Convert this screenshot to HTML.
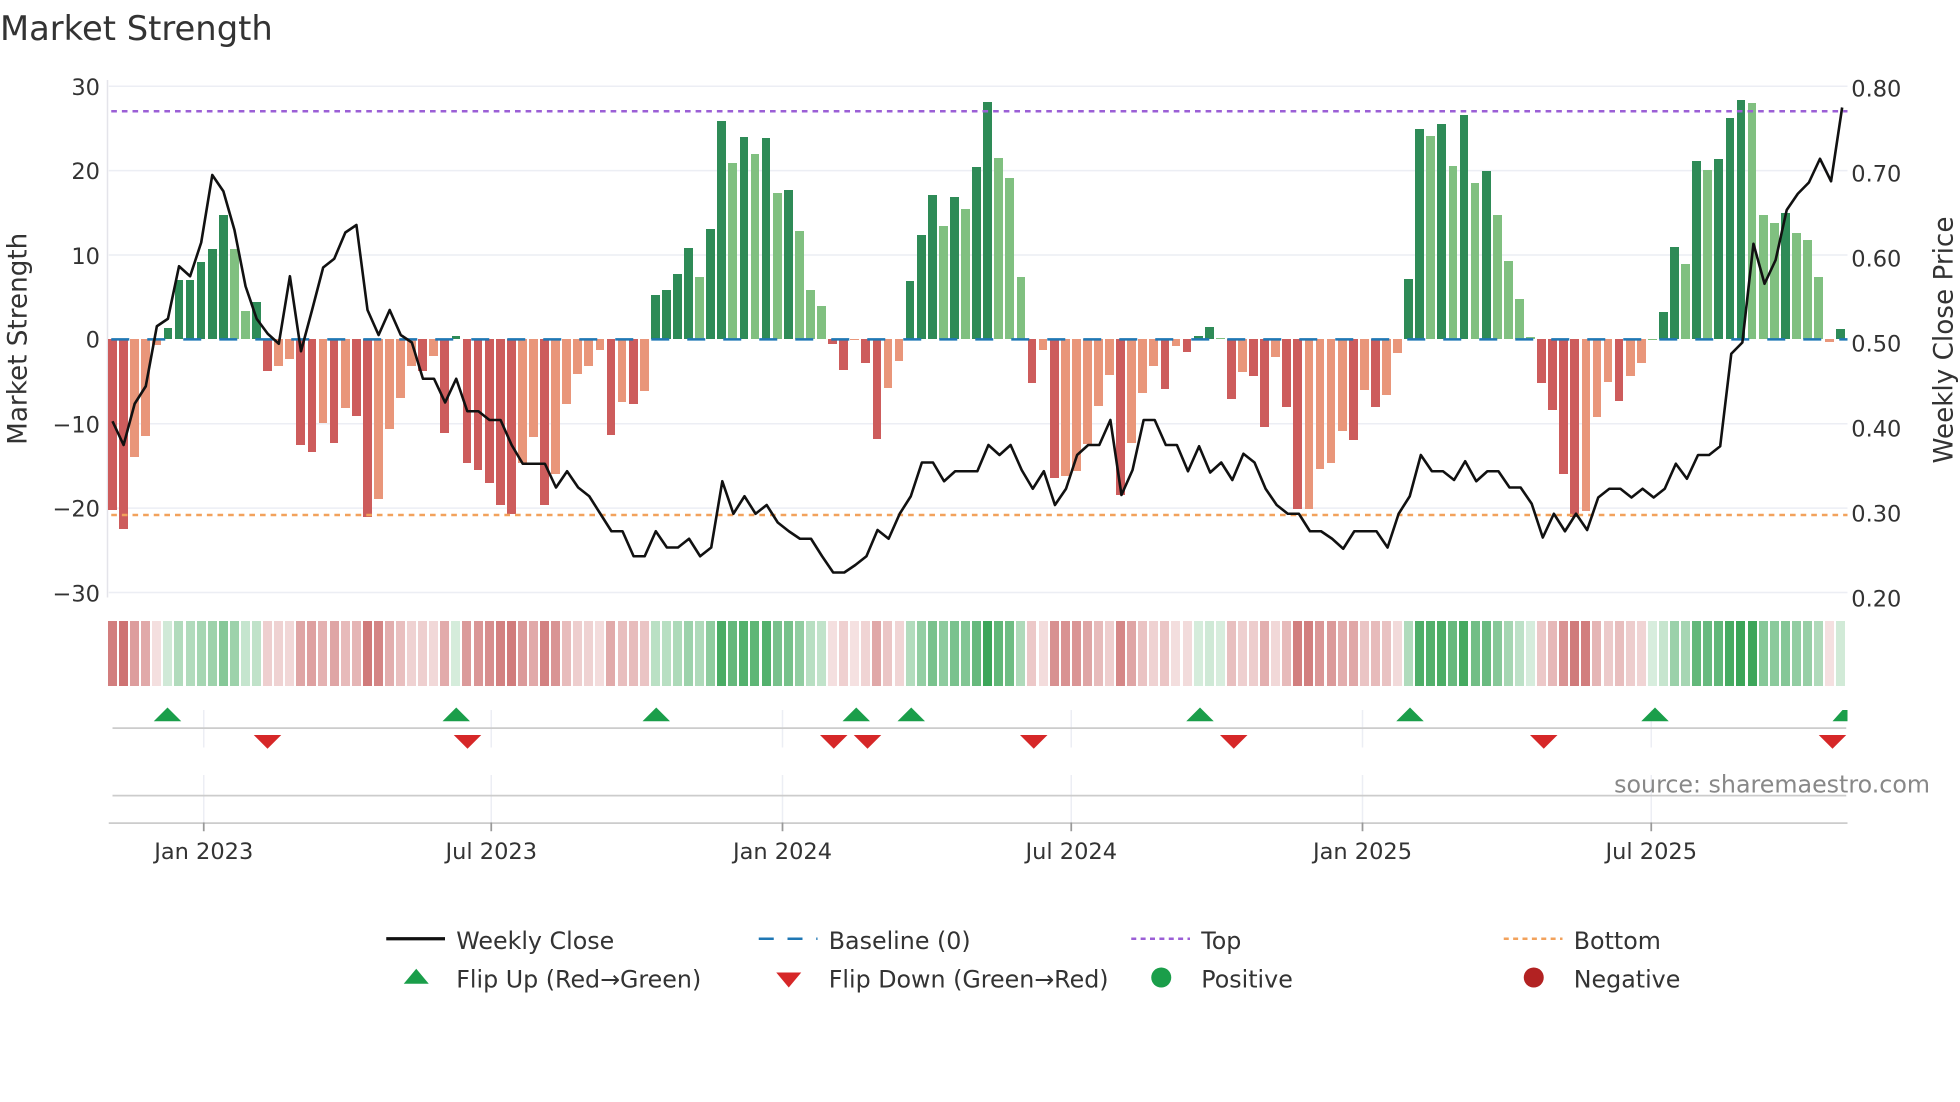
<!DOCTYPE html>
<html><head><meta charset="utf-8">
<style>
html,body{margin:0;padding:0;background:#fff;}
body{position:relative;width:1960px;height:1102px;overflow:hidden;}
svg{display:block;position:absolute;left:0;top:0;font-family:"DejaVu Sans","Liberation Sans",sans-serif;}
.cols{position:absolute;left:106.96px;top:339.4px;display:flex;}
.cols b{position:relative;display:block;width:11.0875px;height:0;flex:none;}
.cols b::before{content:"";position:absolute;left:1.17px;width:8.75px;}
.g::before,.gl::before{bottom:0;height:calc(var(--v) * 8.4375px);}
.r::before,.rl::before{top:0;height:calc(var(--v) * -8.4375px);}
.g::before{background:#2e8b57}.gl::before{background:#80c080}
.r::before{background:#cd5c5c}.rl::before{background:#e9967a}
.cols b::after{content:"";position:absolute;left:1px;width:9px;top:281.9px;height:65px;}
.g::after,.gl::after{background:rgba(58,165,87,min(1,calc(0.2 + var(--v) * 0.028)));}
.r::after,.rl::after{background:rgba(204,110,110,min(1,calc(0.2 - var(--v) * 0.034)));}
</style></head>
<body>
<svg width="1960" height="1102" viewBox="0 0 1568 881.6" xmlns="http://www.w3.org/2000/svg">
<text x="0" y="32" font-size="27" fill="#333">Market Strength</text>
<g stroke="#eceef4" stroke-width="1.2">
<line x1="87" x2="1478" y1="69" y2="69"/>
<line x1="87" x2="1478" y1="136.5" y2="136.5"/>
<line x1="87" x2="1478" y1="204" y2="204"/>
<line x1="87" x2="1478" y1="339" y2="339"/>
<line x1="87" x2="1478" y1="406.5" y2="406.5"/>
<line x1="87" x2="1478" y1="474" y2="474"/>
</g>
<line x1="86" x2="86" y1="64" y2="478" stroke="#e4e4ea" stroke-width="1.2"/>
<g font-size="18" fill="#333" text-anchor="end">
<text x="80" y="76">30</text><text x="80" y="143">20</text><text x="80" y="211">10</text><text x="80" y="278">0</text><text x="80" y="346">−10</text><text x="80" y="413">−20</text><text x="80" y="481">−30</text>
</g>
<g font-size="18" fill="#333">
<text x="1481" y="77">0.80</text><text x="1481" y="145">0.70</text><text x="1481" y="213">0.60</text><text x="1481" y="281">0.50</text><text x="1481" y="349">0.40</text><text x="1481" y="417">0.30</text><text x="1481" y="485">0.20</text>
</g>
<text transform="translate(21,271) rotate(-90)" font-size="21" fill="#333" text-anchor="middle">Market Strength</text>
<text transform="translate(1562,272) rotate(-90)" font-size="21" fill="#333" text-anchor="middle">Weekly Close Price</text>
<g stroke="#eceef4" stroke-width="1.2">
<line x1="163" x2="163" y1="568" y2="598"/><line x1="393" x2="393" y1="568" y2="598"/><line x1="626" x2="626" y1="568" y2="598"/><line x1="857" x2="857" y1="568" y2="598"/><line x1="1090" x2="1090" y1="568" y2="598"/><line x1="1321" x2="1321" y1="568" y2="598"/>
<line x1="163" x2="163" y1="620" y2="658"/><line x1="393" x2="393" y1="620" y2="658"/><line x1="626" x2="626" y1="620" y2="658"/><line x1="857" x2="857" y1="620" y2="658"/><line x1="1090" x2="1090" y1="620" y2="658"/><line x1="1321" x2="1321" y1="620" y2="658"/>
</g>
<line x1="90" x2="1477" y1="582.5" y2="582.5" stroke="#ccc" stroke-width="1.4"/>
<line x1="90" x2="1477" y1="636.5" y2="636.5" stroke="#ccc" stroke-width="1.4"/>
<line x1="87" x2="1478" y1="658.5" y2="658.5" stroke="#ccc" stroke-width="1.4"/>
<g stroke="#999" stroke-width="1.4">
<line x1="163" x2="163" y1="658" y2="665"/><line x1="393" x2="393" y1="658" y2="665"/><line x1="626" x2="626" y1="658" y2="665"/><line x1="857" x2="857" y1="658" y2="665"/><line x1="1090" x2="1090" y1="658" y2="665"/><line x1="1321" x2="1321" y1="658" y2="665"/>
</g>
<g font-size="18" fill="#333" text-anchor="middle">
<text x="163" y="687">Jan 2023</text><text x="393" y="687">Jul 2023</text><text x="626" y="687">Jan 2024</text><text x="857" y="687">Jul 2024</text><text x="1090" y="687">Jan 2025</text><text x="1321" y="687">Jul 2025</text>
</g>
<g fill="#1a9e4a">
<polygon points="123,577 134,566 145,577"/><polygon points="354,577 365,566 376,577"/><polygon points="514,577 525,566 536,577"/><polygon points="674,577 685,566 696,577"/><polygon points="718,577 729,566 740,577"/><polygon points="949,577 960,566 971,577"/><polygon points="1117,577 1128,566 1139,577"/><polygon points="1313,577 1324,566 1335,577"/><polygon points="1466,577 1474,568 1478,568 1478,577"/>
</g>
<g fill="#d62728">
<polygon points="203,588 214,599 225,588"/><polygon points="363,588 374,599 385,588"/><polygon points="656,588 667,599 678,588"/><polygon points="683,588 694,599 705,588"/><polygon points="816,588 827,599 838,588"/><polygon points="976,588 987,599 998,588"/><polygon points="1224,588 1235,599 1246,588"/><polygon points="1455,588 1466,599 1477,588"/>
</g>
<text x="1544" y="634" font-size="19" fill="#888" text-anchor="end">source: sharemaestro.com</text>
<g font-size="19" fill="#333">
<line x1="309" x2="356" y1="751" y2="751" stroke="#111" stroke-width="2.6"/>
<text x="365" y="759">Weekly Close</text>
<line x1="607" x2="654" y1="751" y2="751" stroke="#1f77b4" stroke-width="2" stroke-dasharray="12 11"/>
<text x="663" y="759">Baseline (0)</text>
<line x1="905" x2="952" y1="751" y2="751" stroke="#9b5fd6" stroke-width="2" stroke-dasharray="4 3.5"/>
<text x="961" y="759">Top</text>
<line x1="1203" x2="1250" y1="751" y2="751" stroke="#f2a25c" stroke-width="2" stroke-dasharray="4 3.5"/>
<text x="1259" y="759">Bottom</text>
<polygon points="323,787 333,775 343,787" fill="#1a9e4a"/>
<text x="365" y="790">Flip Up (Red→Green)</text>
<polygon points="621,778 631,790 641,778" fill="#d62728"/>
<text x="663" y="790">Flip Down (Green→Red)</text>
<circle cx="929" cy="782" r="8" fill="#1a9e4a"/>
<text x="961" y="790">Positive</text>
<circle cx="1227" cy="782" r="8" fill="#b22222"/>
<text x="1259" y="790">Negative</text>
</g>
</svg>
<div class="cols">
<b class="r" style="--v:-20.2"></b><b class="r" style="--v:-22.5"></b><b class="rl" style="--v:-13.9"></b><b class="rl" style="--v:-11.5"></b><b class="rl" style="--v:-0.7"></b><b class="g" style="--v:1.4"></b><b class="g" style="--v:7"></b><b class="g" style="--v:7"></b><b class="g" style="--v:9.2"></b><b class="g" style="--v:10.7"></b>
<b class="g" style="--v:14.7"></b><b class="gl" style="--v:10.7"></b><b class="gl" style="--v:3.4"></b><b class="g" style="--v:4.4"></b><b class="r" style="--v:-3.8"></b><b class="rl" style="--v:-3.2"></b><b class="rl" style="--v:-2.3"></b><b class="r" style="--v:-12.5"></b><b class="r" style="--v:-13.4"></b><b class="rl" style="--v:-9.9"></b>
<b class="r" style="--v:-12.3"></b><b class="rl" style="--v:-8.1"></b><b class="r" style="--v:-9.1"></b><b class="r" style="--v:-21.1"></b><b class="rl" style="--v:-18.9"></b><b class="rl" style="--v:-10.6"></b><b class="rl" style="--v:-7"></b><b class="rl" style="--v:-3.2"></b><b class="r" style="--v:-3.8"></b><b class="rl" style="--v:-2"></b>
<b class="r" style="--v:-11.1"></b><b class="g" style="--v:0.4"></b><b class="r" style="--v:-14.7"></b><b class="r" style="--v:-15.5"></b><b class="r" style="--v:-17"></b><b class="r" style="--v:-19.6"></b><b class="r" style="--v:-20.7"></b><b class="rl" style="--v:-14.7"></b><b class="rl" style="--v:-11.6"></b><b class="r" style="--v:-19.6"></b>
<b class="rl" style="--v:-15.9"></b><b class="rl" style="--v:-7.6"></b><b class="rl" style="--v:-4.1"></b><b class="rl" style="--v:-3.2"></b><b class="rl" style="--v:-1.3"></b><b class="r" style="--v:-11.3"></b><b class="rl" style="--v:-7.4"></b><b class="r" style="--v:-7.7"></b><b class="rl" style="--v:-6.1"></b><b class="g" style="--v:5.3"></b>
<b class="g" style="--v:5.8"></b><b class="g" style="--v:7.7"></b><b class="g" style="--v:10.8"></b><b class="gl" style="--v:7.4"></b><b class="g" style="--v:13.1"></b><b class="g" style="--v:25.9"></b><b class="gl" style="--v:20.9"></b><b class="g" style="--v:24"></b><b class="gl" style="--v:22"></b><b class="g" style="--v:23.9"></b>
<b class="gl" style="--v:17.4"></b><b class="g" style="--v:17.7"></b><b class="gl" style="--v:12.8"></b><b class="gl" style="--v:5.8"></b><b class="gl" style="--v:4"></b><b class="r" style="--v:-0.6"></b><b class="r" style="--v:-3.6"></b><b class="rl" style="--v:-0.1"></b><b class="r" style="--v:-2.8"></b><b class="r" style="--v:-11.8"></b>
<b class="rl" style="--v:-5.8"></b><b class="rl" style="--v:-2.6"></b><b class="g" style="--v:6.9"></b><b class="g" style="--v:12.4"></b><b class="g" style="--v:17.1"></b><b class="gl" style="--v:13.4"></b><b class="g" style="--v:16.9"></b><b class="gl" style="--v:15.5"></b><b class="g" style="--v:20.4"></b><b class="g" style="--v:28.1"></b>
<b class="gl" style="--v:21.5"></b><b class="gl" style="--v:19.1"></b><b class="gl" style="--v:7.4"></b><b class="r" style="--v:-5.2"></b><b class="rl" style="--v:-1.2"></b><b class="r" style="--v:-16.4"></b><b class="rl" style="--v:-16.2"></b><b class="rl" style="--v:-15.6"></b><b class="rl" style="--v:-12.4"></b><b class="rl" style="--v:-7.9"></b>
<b class="rl" style="--v:-4.2"></b><b class="r" style="--v:-18.5"></b><b class="rl" style="--v:-12.3"></b><b class="rl" style="--v:-6.4"></b><b class="rl" style="--v:-3.2"></b><b class="r" style="--v:-5.9"></b><b class="rl" style="--v:-0.8"></b><b class="r" style="--v:-1.5"></b><b class="g" style="--v:0.4"></b><b class="g" style="--v:1.5"></b>
<b class="gl" style="--v:0.2"></b><b class="r" style="--v:-7.1"></b><b class="rl" style="--v:-3.9"></b><b class="r" style="--v:-4.3"></b><b class="r" style="--v:-10.4"></b><b class="rl" style="--v:-2.1"></b><b class="r" style="--v:-8"></b><b class="r" style="--v:-20.1"></b><b class="rl" style="--v:-20.1"></b><b class="rl" style="--v:-15.4"></b>
<b class="rl" style="--v:-14.7"></b><b class="rl" style="--v:-10.8"></b><b class="r" style="--v:-11.9"></b><b class="rl" style="--v:-6"></b><b class="r" style="--v:-8"></b><b class="rl" style="--v:-6.6"></b><b class="rl" style="--v:-1.6"></b><b class="g" style="--v:7.2"></b><b class="g" style="--v:24.9"></b><b class="gl" style="--v:24.1"></b>
<b class="g" style="--v:25.5"></b><b class="gl" style="--v:20.5"></b><b class="g" style="--v:26.6"></b><b class="gl" style="--v:18.5"></b><b class="g" style="--v:19.9"></b><b class="gl" style="--v:14.7"></b><b class="gl" style="--v:9.3"></b><b class="gl" style="--v:4.8"></b><b class="gl" style="--v:0.3"></b><b class="r" style="--v:-5.2"></b>
<b class="r" style="--v:-8.4"></b><b class="r" style="--v:-16"></b><b class="r" style="--v:-21"></b><b class="rl" style="--v:-20.3"></b><b class="rl" style="--v:-9.2"></b><b class="rl" style="--v:-5"></b><b class="r" style="--v:-7.3"></b><b class="rl" style="--v:-4.3"></b><b class="rl" style="--v:-2.8"></b><b class="gl" style="--v:0.1"></b>
<b class="g" style="--v:3.2"></b><b class="g" style="--v:10.9"></b><b class="gl" style="--v:8.9"></b><b class="g" style="--v:21.2"></b><b class="gl" style="--v:20.1"></b><b class="g" style="--v:21.4"></b><b class="g" style="--v:26.2"></b><b class="g" style="--v:28.4"></b><b class="gl" style="--v:28"></b><b class="gl" style="--v:14.8"></b>
<b class="gl" style="--v:13.8"></b><b class="g" style="--v:15"></b><b class="gl" style="--v:12.6"></b><b class="gl" style="--v:11.8"></b><b class="gl" style="--v:7.4"></b><b class="rl" style="--v:-0.3"></b><b class="g" style="--v:1.2"></b>
</div>
<svg width="1960" height="1102" viewBox="0 0 1568 881.6" xmlns="http://www.w3.org/2000/svg">
<line x1="89" x2="1478" y1="271.5" y2="271.5" stroke="#1f77b4" stroke-width="2" stroke-dasharray="14.4 14.4"/>
<line x1="89" x2="1478" y1="89" y2="89" stroke="#9b5fd6" stroke-width="2" stroke-dasharray="4.5 4"/>
<line x1="89" x2="1478" y1="412" y2="412" stroke="#f2a25c" stroke-width="2" stroke-dasharray="4.5 4"/>
<g transform="translate(90,0) scale(8.87,1)">
<polyline fill="none" stroke="#111" stroke-width="2.6" stroke-linejoin="round" vector-effect="non-scaling-stroke" points="0,337 1,356 2,323 3,309 4,261 5,255 6,213 7,221 8,194 9,140 10,153 11,184 12,229 13,255 14,267 15,275 16,221 17,281 18,248 19,214 20,207 21,186 22,180 23,248 24,268 25,248 26,268 27,274 28,303 29,303 30,322 31,303 32,329 33,329 34,336 35,336 36,356 37,371 38,371 39,371 40,390 41,377 42,390 43,397 44,411 45,425 46,425 47,445 48,445 49,425 50,438 51,438 52,431 53,445 54,438 55,385 56,411 57,397 58,411 59,404 60,418 61,425 62,431 63,431 64,445 65,458 66,458 67,452 68,445 69,424 70,431 71,411 72,397 73,370 74,370 75,385 76,377 77,377 78,377 79,356 80,364 81,356 82,376 83,391 84,377 85,404 86,391 87,364 88,356 89,356 90,336 91,396 92,376 93,336 94,336 95,356 96,356 97,377 98,357 99,378 100,370 101,384 102,363 103,370 104,391 105,404 106,411 107,411 108,425 109,425 110,431 111,439 112,425 113,425 114,425 115,438 116,411 117,397 118,364 119,377 120,377 121,384 122,369 123,385 124,377 125,377 126,390 127,390 128,403 129,430 130,411 131,425 132,411 133,424 134,398 135,391 136,391 137,398 138,391 139,398 140,391 141,371 142,383 143,364 144,364 145,357 146,283 147,274 148,195 149,227 150,208 151,168 152,155 153,146 154,127 155,145 156,86"/>
</g>
</svg>
</body></html>
